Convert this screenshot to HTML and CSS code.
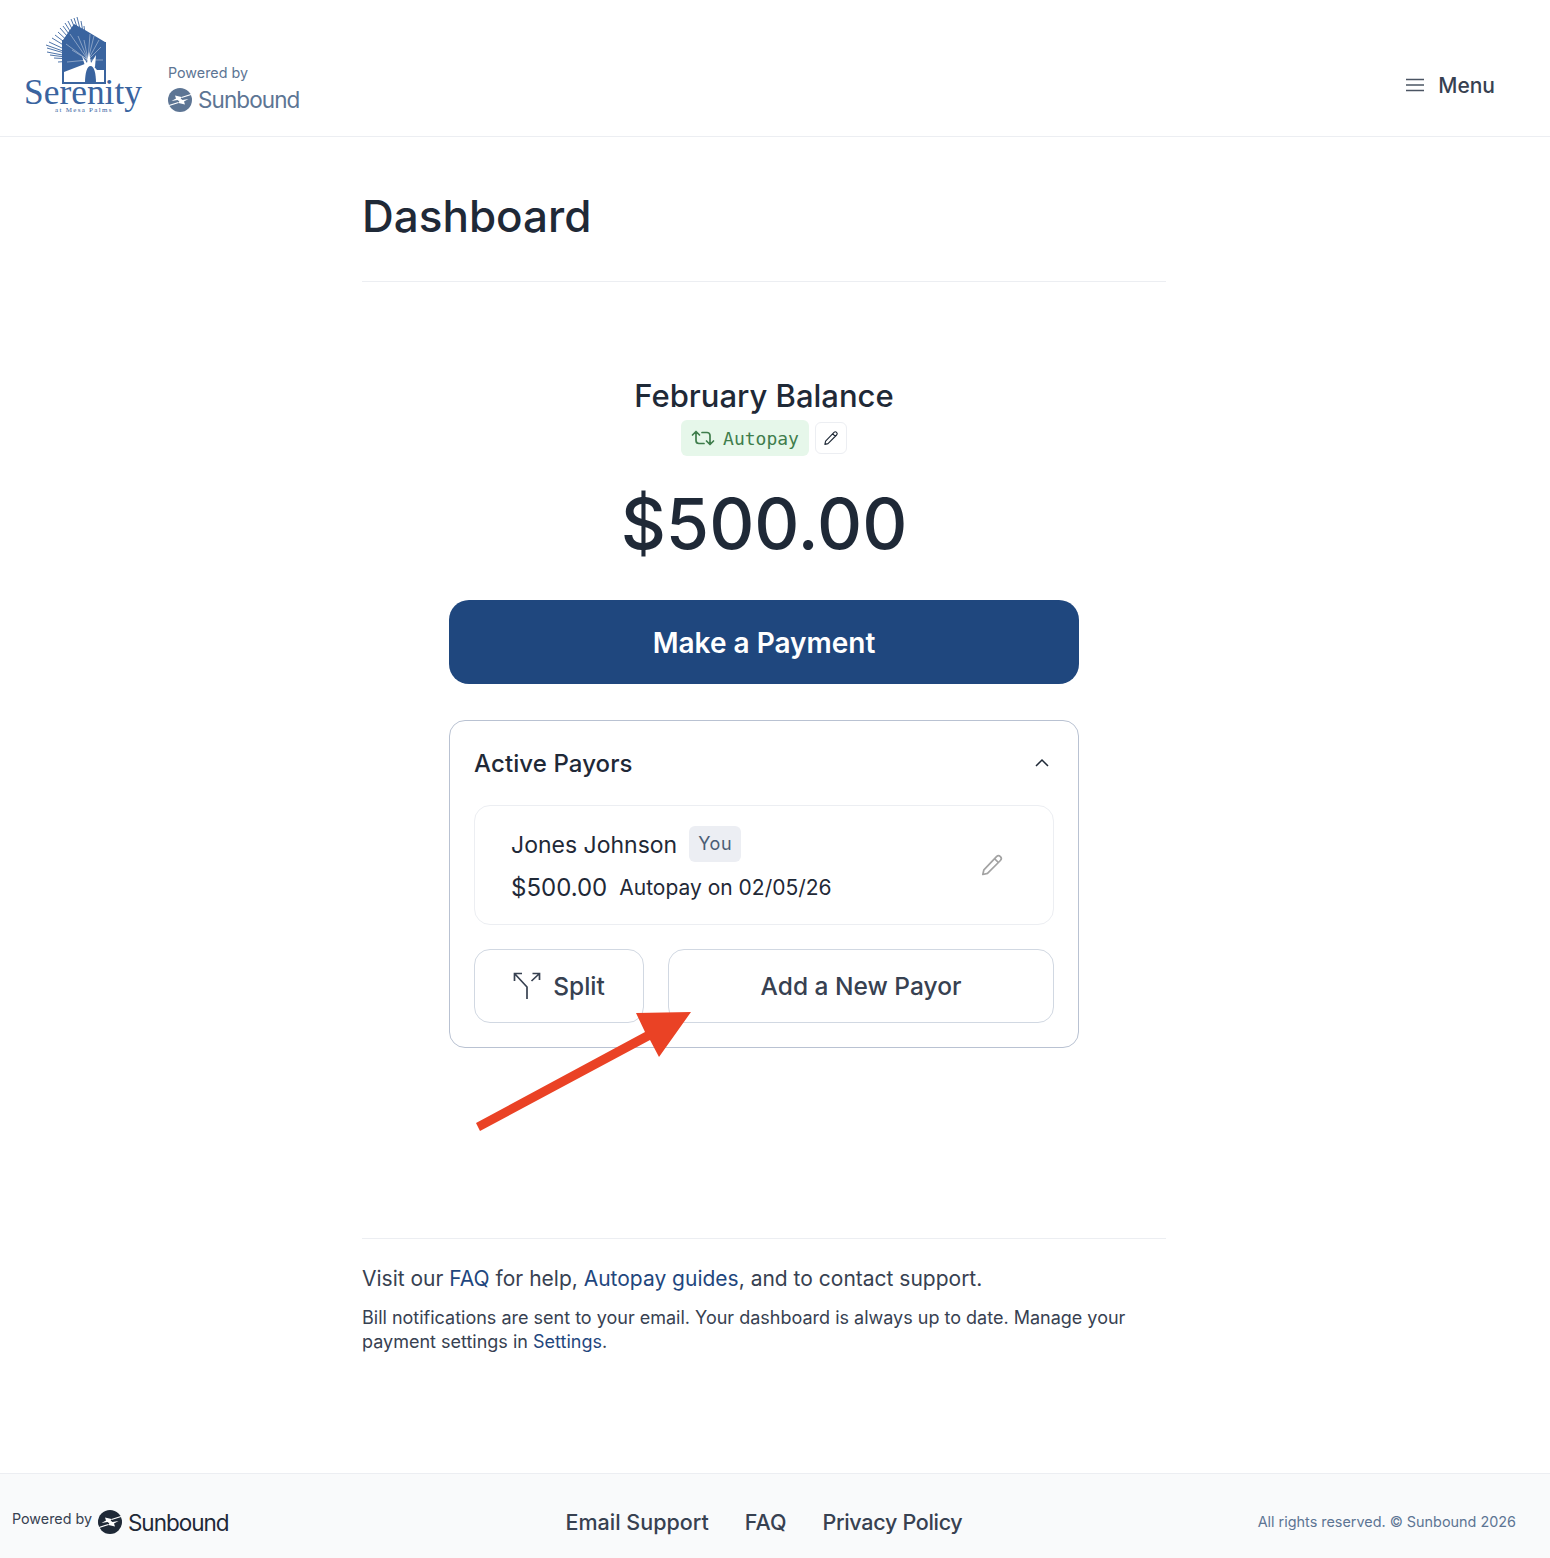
FILE: index.html
```html
<!doctype html>
<html lang="en">
<head>
  <meta charset="UTF-8">
  <title>Dashboard</title>
  <link rel="stylesheet" href="styles.css">
</head>
<body>
  <svg class="defs" width="0" height="0">
    <symbol id="sunbound" viewBox="0 0 24 24">
      <circle cx="12" cy="12" r="12" fill="currentColor"/>
      <path d="M3.500 13 8 10.500 7 7.500 13.500 9 11.500 13.500 9.500 12Z" fill="#fff"/>
      <path d="M20.500 11 16 13.500 17 16.500 10.500 15 12.500 10.500 14.500 12Z" fill="#fff"/>
      <path d="M23 6.500 13.500 9.500M1 17.500 10.500 14.500" stroke="#fff" stroke-width="1.300" fill="none"/>
    </symbol>
    <symbol id="pencil" viewBox="0 0 24 24">
      <path d="M16.500 3.600a2.400 2.400 0 0 1 3.900 3.900L7.500 20.400 2.800 21.500l1.100-4.700L16.500 3.600Z M14.500 5.600l3.900 3.900" fill="none" stroke="currentColor" stroke-width="1.700" stroke-linejoin="round"/>
    </symbol>
  </svg>

  <header class="topbar">
    <div class="brand">
      <!-- viewBox uses page coordinates -->
      <svg class="logo" width="125" height="100" viewBox="21 15 125 100">
        <path d="M63 40 74 24 85 30 105 42V70H97L90 62 64 72Z" fill="#3a649f"/>
        <path d="M63 40V83H105V42" fill="none" stroke="#3a649f" stroke-width="2"/>
        <g stroke="#3a649f" stroke-width="0.900">
          <path d="M88 60 46 45M88 60 47 48M88 60 47 52M88 60 49 42M88 60 50 55M88 60 52 38M88 60 54 58M88 60 55 35M88 60 58 62"/>
          <path d="M88 60 58 32M88 60 60 28M88 60 62 66M88 60 63 26M88 60 65 23M88 60 68 21M88 60 71 19M88 60 77 17M88 60 74 18M88 60 81 21M88 60 84 26"/>
        </g>
        <g stroke="#fff" stroke-width="0.500" opacity="0.800">
          <path d="M88 60 70 34M88 60 78 36M88 60 94 36M88 60 101 47M88 60 72 50M88 60 67 62M88 60 84 40M88 60 103 60M88 60 66 44M88 60 90 34M88 60 99 40"/>
        </g>
        <path d="M85 66 82 56 87 63 89 52 91 63 96 55 95 67Z" fill="#fff"/>
        <path d="M85 83c0-10 2-17 5.500-17s5.500 7 5.500 17Z" fill="#3a649f"/>
        <text class="logo-name" x="24" y="104">Serenity</text>
        <text class="logo-sub" x="55" y="112">at Mesa Palms</text>
      </svg>
      <div class="powered">
        <span class="powered-label">Powered by</span>
        <span class="sunbound">
          <svg class="sun-icon" width="24" height="24"><use href="#sunbound"/></svg>
          <span class="sun-name">Sunbound</span>
        </span>
      </div>
    </div>
    <div class="menu">
      <svg width="18" height="14" viewBox="0 0 18 14"><path d="M0 1.500H18M0 7H18M0 12.500H18" stroke="#4b5563" stroke-width="1.400"/></svg>
      <span>Menu</span>
    </div>
  </header>

  <main class="content">
    <h1 class="title">Dashboard</h1>

    <section class="balance">
      <h2 class="balance-month">February Balance</h2>
      <div class="autopay-row">
        <span class="autopay">
          <svg width="24" height="18" viewBox="0 0 24 18" fill="none" stroke="#3f7d4c" stroke-width="1.700" stroke-linecap="round" stroke-linejoin="round">
            <path d="M1.500 6 5 2.500 8.500 6M5 3v8.500a3 3 0 0 0 3 3h5"/>
            <path d="M22.500 12 19 15.500 15.500 12M19 15V6.500a3 3 0 0 0-3-3h-5"/>
          </svg>
          Autopay
        </span>
        <button class="edit-small"><svg width="16" height="16"><use href="#pencil"/></svg></button>
      </div>
      <div class="amount">$500.00</div>
      <a class="pay-btn">Make a Payment</a>

      <div class="payors">
        <div class="payors-head">
          <h3>Active Payors</h3>
          <svg width="16" height="10" viewBox="0 0 16 10"><path d="M2 8 8 2l6 6" fill="none" stroke="#1f2937" stroke-width="1.500"/></svg>
        </div>
        <div class="payor-card">
          <div class="payor-info">
            <div class="payor-line">
              <span class="payor-name">Jones Johnson</span>
              <span class="you">You</span>
            </div>
            <div class="payor-line payor-line-2">
              <span class="payor-amt">$500.00</span>
              <span class="payor-when">Autopay on 02/05/26</span>
            </div>
          </div>
          <svg class="payor-edit" width="24" height="24"><use href="#pencil"/></svg>
        </div>
        <div class="payor-actions">
          <button class="act act-split">
            <svg width="28" height="28" viewBox="0 0 28 28" fill="none" stroke="#374151" stroke-width="1.700">
              <path d="M9 1.500H1.500V9M1.500 1.500 14 15V27M19.500 1.500H26.500V8M26.500 1.500 18.500 9"/>
            </svg>
            Split
          </button>
          <button class="act act-add">Add a New Payor</button>
        </div>
      </div>
      <svg class="arrow" width="217" height="120" viewBox="0 0 217 120">
        <path d="M161 1 216 0 184 45 175 28 5 119 1 111 170 20Z" fill="#ea4225"/>
      </svg>
    </section>

    <section class="help">
      <p class="help-lead">Visit our <a>FAQ</a> for help, <a>Autopay guides</a>, and to contact support.</p>
      <p class="help-note">Bill notifications are sent to your email. Your dashboard is always up to date. Manage your payment settings in <a>Settings</a>.</p>
    </section>
  </main>

  <footer class="footer">
    <div class="foot-brand">
      <span class="foot-label">Powered by</span>
      <svg class="sun-icon" width="24" height="24"><use href="#sunbound"/></svg>
      <span class="sun-name">Sunbound</span>
    </div>
    <nav class="foot-links">
      <a>Email Support</a>
      <a>FAQ</a>
      <a class="foot-privacy">Privacy Policy</a>
    </nav>
    <div class="foot-copy">All rights reserved. © Sunbound 2026</div>
  </footer>
</body>
</html>
```

FILE: styles.css
```css
* {box-sizing: border-box;}
body {margin: 0; background: #fff; color: #1f2937; font-family: Inter, "Noto Sans", sans-serif;}
h1, h2, h3, p {margin: 0; font-weight: 500;}
button {font-family: inherit; background: #fff; cursor: pointer;}
.defs {position: absolute;}

.topbar {height: 137px; border-bottom: 1px solid #eceef2; display: flex; justify-content: space-between; align-items: center; padding: 0 55px 0 21px;}
.brand {display: flex; align-items: flex-start; height: 100%;}
.logo {margin-top: 15px; display: block; flex: none;}
.logo-name {font-family: "Liberation Serif", serif; font-size: 35.4px; fill: #3a649f;}
.logo-sub {font-family: "Liberation Serif", serif; font-size: 7px; letter-spacing: 1.3px; fill: #3a649f;}
.powered {display: flex; flex-direction: column; margin: 64px 0 0 22px; color: #5d7594;}
.powered-label {font-size: 14.3px; line-height: 18px;}
.sunbound {display: flex; align-items: center; gap: 6px; margin-top: 4px;}
.sun-name {font-size: 22.5px; letter-spacing: -0.9px;}
.sun-icon {display: block; color: inherit;}
.menu {display: flex; align-items: center; gap: 14px; font-size: 21px; font-weight: 500; color: #374151; margin-top: 34px;}

.content {width: 804px; margin-left: 362px;}
.title {font-size: 44px; line-height: 52px; padding: 53px 0 39px; border-bottom: 1px solid #eceef2; color: #1f2937;}

.balance {position: relative; width: 630px; margin: 0 auto; display: flex; flex-direction: column; align-items: center; padding: 96px 0 190px;}
.balance-month {font-size: 31px; line-height: 36px;}
.autopay-row {display: flex; align-items: center; gap: 6px; margin-top: 6px;}
.autopay {display: flex; align-items: center; gap: 8px; height: 36px; padding: 0 10px; background: #e6f7ea; border-radius: 6px; color: #3f7d4c; font-family: "DejaVu Sans Mono", monospace; font-size: 18px;}
.edit-small {width: 32px; height: 32px; border: 1px solid #eceef2; border-radius: 6px; padding: 0; display: flex; align-items: center; justify-content: center; color: #1f2937;}
.amount {font-size: 70px; line-height: 88px; font-weight: 500; margin-top: 24px; margin-bottom: -1px; color: #1f2937;}
.pay-btn {width: 100%; height: 84px; margin-top: 33px; padding-top: 1px; border-radius: 20px; background: #1f477e; color: #fff; font-size: 28px; font-weight: 600; display: flex; align-items: center; justify-content: center;}

.payors {width: 100%; margin-top: 36px; border: 1px solid #b9c2d2; border-radius: 16px; padding: 24px;}
.payors-head {display: flex; justify-content: space-between; align-items: center; padding-right: 4px;}
.payors-head h3 {font-size: 24px; line-height: 36px; letter-spacing: 0.1px; padding-top: 1px; height: 36px;}
.payor-card {display: flex; justify-content: space-between; align-items: center; margin-top: 24px; height: 120px; border: 1px solid #eceef2; border-radius: 16px; padding: 0 49px 0 36px;}
.payor-line {display: flex; align-items: center; gap: 12px;}
.payor-line-2 {margin-top: 5px;}
.payor-name {font-size: 23px; line-height: 36px; color: #1f2937; font-weight: 400; padding-top: 2px;}
.you {height: 36px; padding: 0 9px; display: flex; align-items: center; background: #eceef3; border-radius: 6px; color: #4b5d75; font-size: 18px; letter-spacing: 0.6px;}
.payor-amt {font-size: 24px; line-height: 36px; padding-top: 2px;}
.payor-when {font-size: 21px; line-height: 36px; padding-top: 2px;}
.payor-edit {color: #a3a3a3;}
.payor-actions {display: flex; gap: 24px; margin-top: 24px;}
.act {height: 74px; border: 1px solid #d1d8e2; border-radius: 16px; font-size: 24.500px; font-weight: 500; color: #374151; display: flex; align-items: center; justify-content: center;}
.act-split {width: 170px; gap: 12px;}
.act-add {flex: 1;}
.arrow {position: absolute; left: 26px; top: 730px; display: block;}

.help {border-top: 1px solid #eceef2; padding: 25px 0 0; height: 235px;}
.help a {color: #1f477e;}
.help-lead {font-size: 21px; line-height: 30px; font-weight: 400; color: #374151;}
.help-note {font-size: 18px; line-height: 24px; font-weight: 400; color: #374151; margin-top: 12px;}

.footer {height: 85px; background: #f9fafb; border-top: 1px solid #eceef2; display: grid; grid-template-columns: 1fr auto 1fr; align-items: center; padding: 12px 34px 0 12px; color: #1f2937;}
.foot-brand {display: flex; align-items: center; gap: 6px;}
.foot-label {font-size: 14.3px; color: #374151; margin-top: -8px;}
.foot-links {display: flex; gap: 36px; font-size: 21.500px; font-weight: 500; color: #374151;}
.foot-privacy {letter-spacing: -0.3px;}
.foot-copy {justify-self: end; font-size: 14.400px; color: #5d7594; margin-top: -2px;}
.footer .sun-name {letter-spacing: -1px; font-size: 22.500px;}
```
